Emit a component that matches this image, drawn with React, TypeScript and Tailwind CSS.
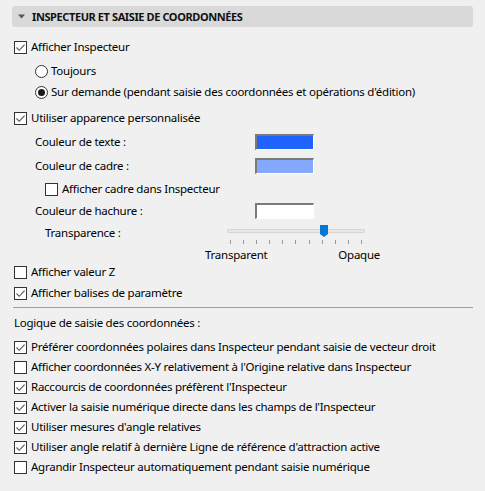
import React from "react";

const font = { fontFamily: '"Noto Sans", "Open Sans", sans-serif' };

const Checkbox = ({ checked }: { checked?: boolean }) => (
  <span className="flex h-[13px] w-[13px] shrink-0 items-center justify-center border border-[#333333] bg-white">
    {checked && (
      <svg width="11" height="11" viewBox="0 0 11 11">
        <path d="M1.5 5.5 L4.2 8.3 L9.6 2.6" fill="none" stroke="#555555" strokeWidth="1.1" />
      </svg>
    )}
  </span>
);

const Radio = ({ checked }: { checked?: boolean }) => (
  <span className="flex h-[13px] w-[13px] shrink-0 items-center justify-center rounded-full border border-[#333333] bg-white">
    {checked && <span className="h-[7px] w-[7px] rounded-full bg-[#1a1a1a]" />}
  </span>
);

const CheckRow = ({ checked, label, className = "" }: { checked?: boolean; label: string; className?: string }) => (
  <div className={`flex h-5 items-center gap-1 ${className}`}>
    <Checkbox checked={checked} />
    <span className="whitespace-nowrap">{label}</span>
  </div>
);

const Swatch = ({ color }: { color: string }) => (
  <span
    className={`h-[16px] w-[59px] border-t-2 border-l-2 border-r border-b border-t-[#7a7a7a] border-l-[#7a7a7a] border-r-white border-b-white ${color}`}
  />
);

const ColorRow = ({ label, color, className = "" }: { label: string; color: string; className?: string }) => (
  <div className={`flex h-5 items-center pl-[21px] ${className}`}>
    <span className="w-[220px]">{label}</span>
    <Swatch color={color} />
  </div>
);

const ticks = Array.from({ length: 11 });

const logic = [
  { checked: true, label: "Préférer coordonnées polaires dans Inspecteur pendant saisie de vecteur droit" },
  { checked: false, label: "Afficher coordonnées X-Y relativement à l'Origine relative dans Inspecteur" },
  { checked: true, label: "Raccourcis de coordonnées préfèrent l'Inspecteur" },
  { checked: true, label: "Activer la saisie numérique directe dans les champs de l'Inspecteur" },
  { checked: true, label: "Utiliser mesures d'angle relatives" },
  { checked: true, label: "Utiliser angle relatif à dernière Ligne de référence d'attraction active" },
  { checked: false, label: "Agrandir Inspecteur automatiquement pendant saisie numérique" },
];

export default function App() {
  return (
    <div
      className="flex h-[491px] w-[485px] flex-col bg-[#f0f0f0] pt-[6px] pl-[14px] pr-[12px] text-[11.5px] leading-none tracking-[-0.25px] text-[#000000]"
      style={font}
    >
      <div className="-ml-[2px] flex h-[21px] items-center gap-[7px] rounded-[3px] bg-[#d9d9d9] pl-[6px]">
        <svg width="7" height="5" viewBox="0 0 7 5">
          <path d="M0 0.5 L7 0.5 L3.5 4.5 Z" fill="#555555" />
        </svg>
        <span className="text-[11px] font-bold tracking-[-0.4px] text-[#111111]">INSPECTEUR ET SAISIE DE COORDONNÉES</span>
      </div>

      <CheckRow checked label="Afficher Inspecteur" className="mt-[10px]" />
      <div className="mt-[4px] flex h-5 items-center gap-[3px] pl-[21px]">
        <Radio />
        <span>Toujours</span>
      </div>
      <div className="mt-[1px] flex h-5 items-center gap-[3px] pl-[21px]">
        <Radio checked />
        <span>Sur demande (pendant saisie des coordonnées et opérations d'édition)</span>
      </div>

      <CheckRow checked label="Utiliser apparence personnalisée" className="mt-[6px]" />
      <ColorRow label="Couleur de texte :" color="bg-[#2163ff]" className="mt-[4px]" />
      <ColorRow label="Couleur de cadre :" color="bg-[#85a8ff]" className="mt-[4px]" />
      <CheckRow label="Afficher cadre dans Inspecteur" className="mt-[3px] pl-[31px]" />
      <ColorRow label="Couleur de hachure :" color="bg-white" className="mt-[2px]" />

      <div className="mt-[2px] flex pl-[31px]">
        <span className="flex h-5 w-[182px] items-center">Transparence :</span>
        <div className="flex flex-col">
          <div className="relative mt-[2px] h-[12px] w-[138px]">
            <div className="mt-[4px] h-[4px] w-full rounded-[1px] border border-[#d6d6d6] bg-[#e7e7e7]" />
            <svg className="absolute top-0 left-[93px]" width="8" height="12" viewBox="0 0 8 12">
              <path d="M0 0 H8 V9 L4 12 L0 9 Z" fill="#0078d7" />
            </svg>
          </div>
          <div className="mt-[3px] flex w-[138px] justify-between px-[3px]">
            {ticks.map((_, i) => (
              <span key={i} className="h-[4px] w-px bg-[#9a9a9a]" />
            ))}
          </div>
          <div className="-ml-[22px] mt-[4px] flex h-[14px] w-[175px] items-center justify-between">
            <span>Transparent</span>
            <span>Opaque</span>
          </div>
        </div>
      </div>

      <CheckRow label="Afficher valeur Z" className="mt-[0px]" />
      <CheckRow checked label="Afficher balises de paramètre" className="mt-[1px]" />

      <div className="mt-[4px] -ml-[1px] h-px bg-[#a0a0a0]" />

      <div className="mt-[5px] flex h-5 items-center">Logique de saisie des coordonnées :</div>

      <div className="mt-[4px] flex flex-col">
        {logic.map((item) => (
          <CheckRow key={item.label} checked={item.checked} label={item.label} />
        ))}
      </div>
    </div>
  );
}
